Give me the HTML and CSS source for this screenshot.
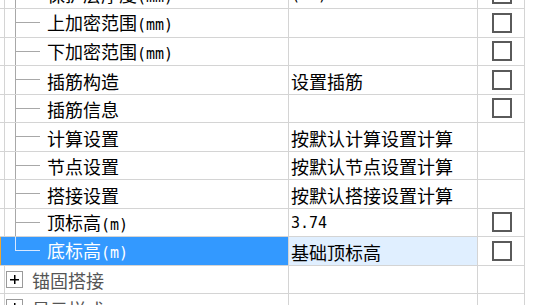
FILE: index.html
```html
<!DOCTYPE html>
<html lang="zh">
<head>
<meta charset="utf-8">
<link rel="stylesheet" href="styles.css">
</head>
<body>
<div class="grid">
  <div class="row">
    <div class="cell name"><span class="tree"></span><span class="label">保护层厚度<span class="unit">(mm)</span></span></div>
    <div class="cell value"><span class="num">(25)</span></div>
    <div class="cell check"><span class="box"></span></div>
  </div>
  <div class="row">
    <div class="cell name"><span class="tree"></span><span class="label">上加密范围<span class="unit">(mm)</span></span></div>
    <div class="cell value"></div>
    <div class="cell check"><span class="box"></span></div>
  </div>
  <div class="row">
    <div class="cell name"><span class="tree"></span><span class="label">下加密范围<span class="unit">(mm)</span></span></div>
    <div class="cell value"></div>
    <div class="cell check"><span class="box"></span></div>
  </div>
  <div class="row">
    <div class="cell name"><span class="tree"></span><span class="label">插筋构造</span></div>
    <div class="cell value">设置插筋</div>
    <div class="cell check"><span class="box"></span></div>
  </div>
  <div class="row">
    <div class="cell name"><span class="tree"></span><span class="label">插筋信息</span></div>
    <div class="cell value"></div>
    <div class="cell check"><span class="box"></span></div>
  </div>
  <div class="row">
    <div class="cell name"><span class="tree"></span><span class="label">计算设置</span></div>
    <div class="cell value">按默认计算设置计算</div>
    <div class="cell check"></div>
  </div>
  <div class="row">
    <div class="cell name"><span class="tree"></span><span class="label">节点设置</span></div>
    <div class="cell value">按默认节点设置计算</div>
    <div class="cell check"></div>
  </div>
  <div class="row">
    <div class="cell name"><span class="tree"></span><span class="label">搭接设置</span></div>
    <div class="cell value">按默认搭接设置计算</div>
    <div class="cell check"></div>
  </div>
  <div class="row">
    <div class="cell name"><span class="tree"></span><span class="label">顶标高<span class="unit">(m)</span></span></div>
    <div class="cell value"><span class="num">3.74</span></div>
    <div class="cell check"><span class="box"></span></div>
  </div>
  <div class="row selected">
    <div class="cell name"><span class="tree last"></span><span class="label">底标高<span class="unit">(m)</span></span></div>
    <div class="cell value">基础顶标高</div>
    <div class="cell check"><span class="box"></span></div>
  </div>
  <div class="row group">
    <div class="cell name"><span class="expander"></span><span class="label">锚固搭接</span></div>
    <div class="cell value"></div>
    <div class="cell check"></div>
  </div>
  <div class="row group">
    <div class="cell name"><span class="expander"></span><span class="label">显示样式</span></div>
    <div class="cell value"></div>
    <div class="cell check"></div>
  </div>
</div>
</body>
</html>
```

FILE: styles.css
```css
html, body {
  margin: 0;
  padding: 0;
  background: #ffffff;
  overflow: hidden;
}

body {
  font-family: "Noto Sans CJK SC", "Noto Sans", sans-serif;
  font-size: 18px;
  color: #000000;
}

.grid {
  width: 525px;
  margin-top: -19.5px;
  display: flex;
  flex-direction: column;
}

.row {
  display: flex;
  height: 28.5px;
}

.cell {
  box-sizing: border-box;
  height: 100%;
  border-bottom: 1px solid #d4d4d4;
  border-right: 1px solid #d4d4d4;
  display: flex;
  align-items: center;
  white-space: nowrap;
  line-height: 28px;
}

.name {
  width: 289px;
  background:
    linear-gradient(#d4d4d4, #d4d4d4) 4px 0 / 1px 100% no-repeat;
}

.value {
  width: 189px;
  padding-left: 2px;
}

.check {
  width: 47px;
  justify-content: center;
  padding-left: 2px;
}

.tree {
  flex: none;
  width: 47px;
  height: 100%;
  background:
    linear-gradient(#a8a8a8, #a8a8a8) 15px 0 / 1px 100% no-repeat,
    linear-gradient(#a8a8a8, #a8a8a8) 16px 50% / 24px 1px no-repeat;
}

.tree.last {
  background:
    linear-gradient(#d8e8ff, #d8e8ff) 15px 0 / 1px 51% no-repeat,
    linear-gradient(#d8e8ff, #d8e8ff) 16px 50% / 24px 1px no-repeat;
}

.label {
  padding-top: 2px;
}

.value {
  padding-top: 2px;
}

.unit,
.num {
  font-family: "DejaVu Sans Mono", "Liberation Mono", monospace;
  font-size: 15px;
}

.box {
  box-sizing: border-box;
  width: 20px;
  height: 20px;
  border: 2px solid #5a5a5a;
  background: #ffffff;
}

.selected .name {
  background: #3399ff;
  box-shadow: inset 1px 0 0 #f0a830;
  color: #ffffff;
}

.selected .value {
  background: #e0efff;
}

.expander {
  flex: none;
  box-sizing: border-box;
  width: 17px;
  height: 17px;
  margin-left: 6px;
  margin-right: 9px;
  border: 1px solid #9a9a9a;
  background:
    linear-gradient(#000000, #000000) center / 9px 1.5px no-repeat,
    linear-gradient(#000000, #000000) center / 1.5px 9px no-repeat,
    #ffffff;
}

.group .label {
  color: #555555;
}
```
